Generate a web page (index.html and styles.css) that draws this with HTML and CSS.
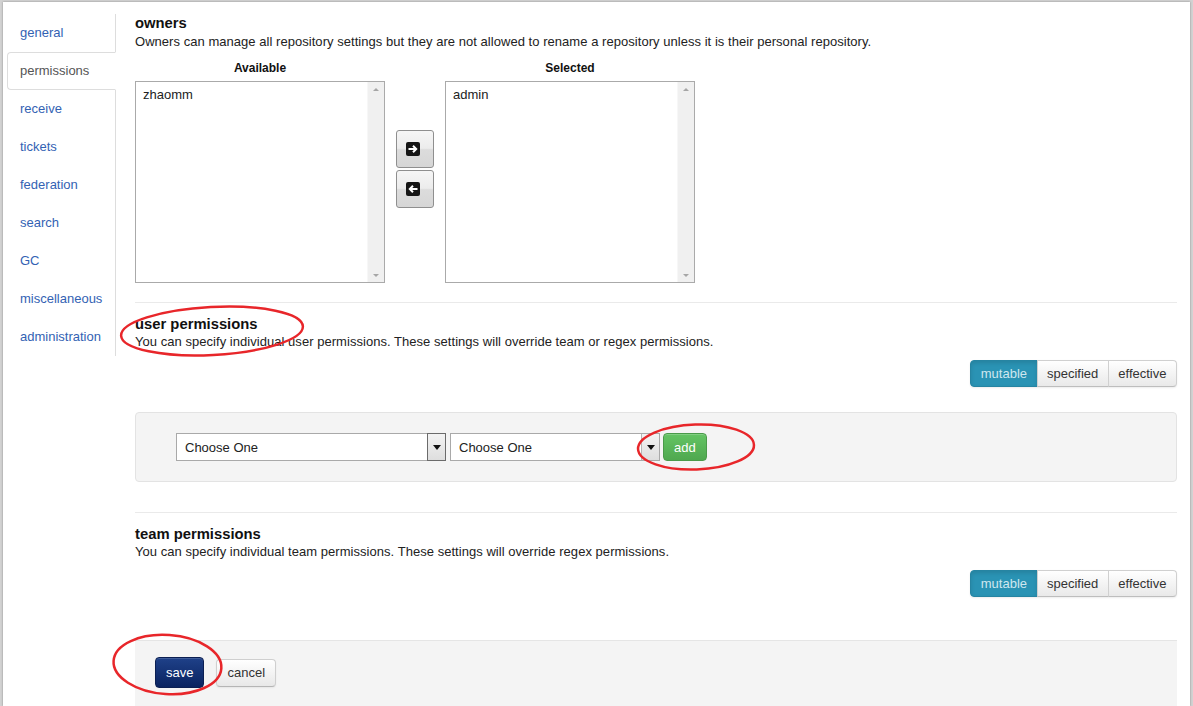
FILE: index.html
```html
<!DOCTYPE html>
<html>
<head>
<meta charset="utf-8">
<title>permissions</title>
<link rel="stylesheet" href="styles.css">
</head>
<body>
<div class="window">
  <ul class="tabs">
    <li><a href="#">general</a></li>
    <li><a href="#" class="active">permissions</a></li>
    <li><a href="#">receive</a></li>
    <li><a href="#">tickets</a></li>
    <li><a href="#">federation</a></li>
    <li><a href="#">search</a></li>
    <li><a href="#">GC</a></li>
    <li><a href="#">miscellaneous</a></li>
    <li><a href="#">administration</a></li>
  </ul>
  <div class="content">
    <h3 class="title">owners</h3>
    <p class="desc">Owners can manage all repository settings but they are not allowed to rename a repository unless it is their personal repository.</p>
    <div class="palette">
      <div class="pcol">
        <div class="plabel">Available</div>
        <div class="listbox">
          <div class="items"><div class="item">zhaomm</div></div>
          <div class="scroll"><span class="up"></span><span class="down"></span></div>
        </div>
      </div>
      <div class="pbtns">
        <button class="pbtn" type="button">
          <svg width="14" height="14" viewBox="0 0 14 14"><rect width="14" height="14" rx="2" fill="#151515"/><path d="M2.5 7H10M7 3.8L10.2 7 7 10.2" stroke="#fff" stroke-width="2" fill="none"/></svg>
        </button>
        <button class="pbtn" type="button">
          <svg width="14" height="14" viewBox="0 0 14 14"><rect width="14" height="14" rx="2" fill="#151515"/><path d="M11.5 7H4M7 3.8L3.8 7 7 10.2" stroke="#fff" stroke-width="2" fill="none"/></svg>
        </button>
      </div>
      <div class="pcol">
        <div class="plabel">Selected</div>
        <div class="listbox">
          <div class="items"><div class="item">admin</div></div>
          <div class="scroll"><span class="up"></span><span class="down"></span></div>
        </div>
      </div>
    </div>

    <hr class="rule rule-first">

    <h3 class="title sub">user permissions</h3>
    <p class="desc sub">You can specify individual user permissions. These settings will override team or regex permissions.</p>
    <div class="toolbar">
      <div class="btn-group">
        <span class="gbtn active">mutable</span><span class="gbtn">specified</span><span class="gbtn">effective</span>
      </div>
    </div>
    <div class="well">
      <div class="select wide"><span class="sel-text">Choose One</span><span class="sel-arrow focus"></span></div>
      <div class="select narrow"><span class="sel-text">Choose One</span><span class="sel-arrow"></span></div>
      <button class="btn-add" type="button">add</button>
    </div>

    <hr class="rule rule-second">

    <h3 class="title sub">team permissions</h3>
    <p class="desc sub">You can specify individual team permissions. These settings will override regex permissions.</p>
    <div class="toolbar">
      <div class="btn-group">
        <span class="gbtn active">mutable</span><span class="gbtn">specified</span><span class="gbtn">effective</span>
      </div>
    </div>

    <div class="form-actions">
      <button class="btn-save" type="button">save</button>
      <button class="btn-cancel" type="button">cancel</button>
    </div>
  </div>
</div>
<svg class="annot" width="1193" height="706" viewBox="0 0 1193 706">
  <ellipse cx="212" cy="331" rx="91" ry="24" transform="rotate(-3 212 331)" fill="none" stroke="#e8262a" stroke-width="2.5"/>
  <ellipse cx="696" cy="447" rx="58" ry="22.5" transform="rotate(-2 696 447)" fill="none" stroke="#e8262a" stroke-width="2.5"/>
  <ellipse cx="167.5" cy="664.5" rx="54" ry="29.5" transform="rotate(4 167 664)" fill="none" stroke="#e8262a" stroke-width="2.5"/>
</svg>
</body>
</html>
```

FILE: styles.css
```css
html, body {
  margin: 0;
  padding: 0;
}
body {
  background: #d2d2d2;
  font-family: "Liberation Sans", Arial, sans-serif;
  font-size: 13px;
  color: #333;
  overflow: hidden;
}
.window {
  margin: 2px 3px 0 3px;
  height: 704px;
  background: #fff;
  box-sizing: border-box;
  padding: 0 13px 0 4px;
  display: flex;
  align-items: flex-start;
  overflow: hidden;
  box-shadow: 0 0 2px rgba(0,0,0,0.35);
}

/* sidebar tabs */
.tabs {
  list-style: none;
  margin: 12px 0 0 0;
  padding: 0;
  width: 109px;
  box-sizing: border-box;
  border-right: 1px solid #ddd;
  flex: none;
}
.tabs a {
  display: block;
  padding: 8px 12px;
  line-height: 20px;
  border: 1px solid transparent;
  border-radius: 4px 0 0 4px;
  margin-right: -1px;
  color: #3362b3;
  text-decoration: none;
  font-size: 13px;
}
.tabs a.active {
  color: #555;
  background: #fff;
  border-color: #ddd #fff #ddd #ddd;
}

/* content */
.content {
  flex: none;
  width: 1042px;
  margin-left: 19px;
  padding-top: 12px;
}
.title {
  margin: 0;
  font-size: 14.8px;
  line-height: 19px;
  font-weight: bold;
  color: #111;
}
.title.sub {
  padding-top: 2px;
}
.desc {
  margin: 0;
  font-size: 13px;
  line-height: 18px;
  color: #222;
  letter-spacing: 0.04px;
}
.desc.sub {
  margin-top: -1px;
}

/* palette */
.palette {
  display: flex;
  margin-top: 8px;
}
.pcol {
  width: 250px;
}
.plabel {
  text-align: center;
  font-weight: bold;
  font-size: 12px;
  line-height: 18px;
  margin-bottom: 4px;
  color: #111;
}
.listbox {
  height: 202px;
  box-sizing: border-box;
  border: 1px solid #aaa;
  display: flex;
  background: #fff;
}
.items {
  flex: 1;
  padding: 4px 7px;
}
.item {
  line-height: 18px;
  color: #222;
}
.scroll {
  width: 16px;
  flex: none;
  background: #f0f0f0;
  border-left: 1px solid #f7f7f7;
  display: flex;
  flex-direction: column;
  justify-content: space-between;
  align-items: center;
  padding: 6px 0 5px;
}
.up, .down {
  width: 0;
  height: 0;
  border-left: 3px solid transparent;
  border-right: 3px solid transparent;
}
.up { border-bottom: 3px solid #a6a6a6; }
.down { border-top: 3px solid #a6a6a6; }

.pbtns {
  width: 60px;
  display: flex;
  flex-direction: column;
  align-items: center;
  gap: 2px;
  padding-top: 71px;
}
.pbtn {
  width: 38px;
  height: 38px;
  padding: 0 4px 0 0;
  margin: 0;
  border: 1px solid #8f8f8f;
  border-radius: 3px;
  background: linear-gradient(#f6f6f6 0%, #ececec 48%, #dcdcdc 52%, #d6d6d6 100%);
  display: flex;
  align-items: center;
  justify-content: center;
}
.pbtn svg { display: block; }

/* rules */
.rule {
  border: 0;
  border-top: 1px solid #eaeaea;
  height: 0;
  margin: 0;
}
.rule-first { margin: 19px 0 10px; }
.rule-second { margin: 30px 0 10px; }

/* toolbar */
.toolbar {
  display: flex;
  justify-content: flex-end;
  margin-top: 9px;
}
.btn-group {
  display: flex;
  box-shadow: 0 1px 2px rgba(0,0,0,0.08);
  border-radius: 4px;
}
.gbtn {
  display: block;
  padding: 3px 9.5px;
  line-height: 19px;
  font-size: 13px;
  color: #333;
  border: 1px solid #d0d0d0;
  border-bottom-color: #bdbdbd;
  margin-left: -1px;
  background: linear-gradient(#ffffff, #e9e9e9);
}
.gbtn:first-child {
  margin-left: 0;
  border-radius: 4px 0 0 4px;
}
.gbtn:last-child {
  border-radius: 0 4px 4px 0;
}
.gbtn.active {
  background: #2a93b4;
  border-color: #2684a2;
  color: #cfe7ef;
  box-shadow: inset 0 2px 4px rgba(0,0,0,0.12);
}

/* well */
.well {
  margin-top: 25px;
  padding: 20px 40px;
  background: #f4f4f4;
  border: 1px solid #e3e3e3;
  border-radius: 4px;
  display: flex;
  align-items: center;
}
.select {
  height: 28px;
  box-sizing: border-box;
  border: 1px solid #a9a9a9;
  background: #fff;
  display: flex;
  align-items: stretch;
}
.select.wide { width: 270px; margin-right: 4px; }
.select.narrow { width: 210px; margin-right: 3px; }
.sel-text {
  flex: 1;
  padding-left: 8px;
  line-height: 27px;
  font-size: 13px;
  color: #222;
}
.sel-arrow {
  width: 17px;
  flex: none;
  border-left: 1px solid #b5b5b5;
  background: linear-gradient(#f3f3f3, #dedede);
  display: flex;
  align-items: center;
  justify-content: center;
}
.sel-arrow.focus {
  border: 1px solid #6b6b6b;
  margin: -1px -1px -1px 0;
}
.sel-arrow::after {
  content: "";
  width: 0;
  height: 0;
  border-left: 4px solid transparent;
  border-right: 4px solid transparent;
  border-top: 5px solid #111;
}
.btn-add {
  height: 28px;
  padding: 0 10px;
  margin: 0;
  font-family: "Liberation Sans", Arial, sans-serif;
  font-size: 13px;
  color: #fff;
  border: 1px solid #4a9a4a;
  border-radius: 4px;
  background: linear-gradient(#64c464, #4fa84f);
  box-shadow: inset 0 1px 0 rgba(255,255,255,0.2);
}

/* form actions */
.form-actions {
  margin-top: 43px;
  background: #f4f4f4;
  border-top: 1px solid #e5e5e5;
  padding: 16px 20px 30px;
  display: flex;
  align-items: center;
  gap: 12px;
}
.btn-save {
  height: 31px;
  padding: 0 10px;
  margin: 0;
  font-family: "Liberation Sans", Arial, sans-serif;
  font-size: 13px;
  color: #fff;
  border: 1px solid #0b1f52;
  border-radius: 4px;
  background: linear-gradient(#1f4189, #0a2360);
  box-shadow: inset 0 1px 0 rgba(255,255,255,0.15);
}
.btn-cancel {
  height: 28px;
  padding: 0 10px;
  margin: 0;
  font-family: "Liberation Sans", Arial, sans-serif;
  font-size: 13px;
  color: #333;
  border: 1px solid #cfcfcf;
  border-bottom-color: #b5b5b5;
  border-radius: 4px;
  background: linear-gradient(#ffffff, #e8e8e8);
  box-shadow: 0 1px 2px rgba(0,0,0,0.06);
}

/* annotation overlay */
.annot {
  position: absolute;
  left: 0;
  top: 0;
  pointer-events: none;
}
```
